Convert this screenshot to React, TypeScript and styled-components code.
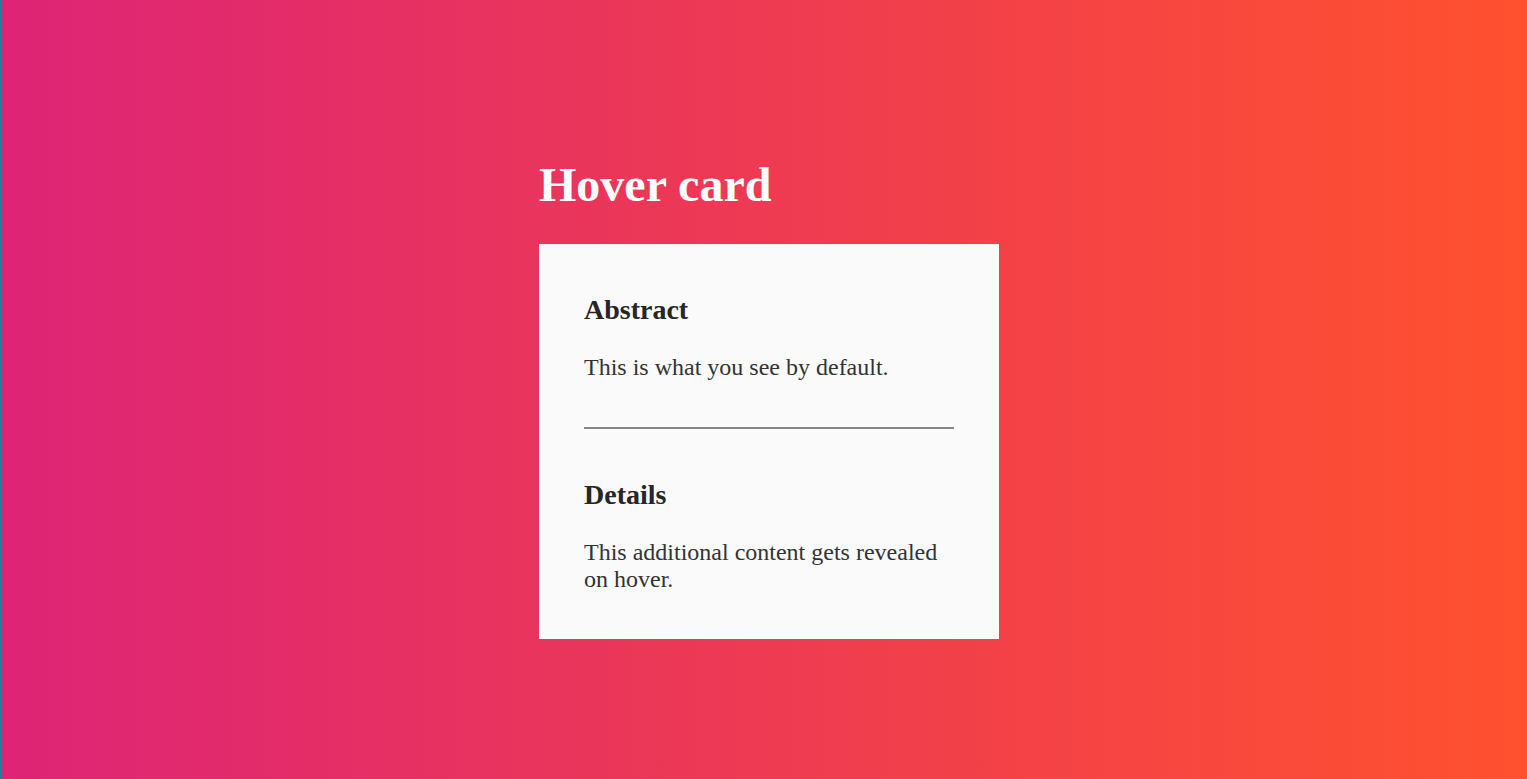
import React from "react";
import styled, { createGlobalStyle } from "styled-components";

const GlobalStyle = createGlobalStyle`
  html, body {
    margin: 0;
    padding: 0;
  }
  body {
    font-family: "Liberation Serif", "Times New Roman", serif;
  }
`;

const Page = styled.main`
  box-sizing: border-box;
  min-height: 100vh;
  border-left: 1px solid #1f7fa8;
  background: linear-gradient(to right, #dd2476, #ff512f);
  padding: 157px 0 0 538px;
  display: flex;
  flex-direction: column;
  align-items: flex-start;
`;

const Title = styled.h1`
  margin: 0;
  font-size: 48px;
  font-weight: 700;
  line-height: normal;
  color: #ffffff;
`;

const Card = styled.article`
  box-sizing: border-box;
  width: 460px;
  margin-top: 32px;
  padding: 50px 45px 46px;
  background: #fafafa;
  color: #333333;
`;

const Heading = styled.h3`
  margin: 0;
  font-size: 28px;
  font-weight: 700;
  line-height: normal;
  color: #262626;
`;

const Text = styled.p`
  margin: 28px 0 0;
  font-size: 24px;
  line-height: normal;
  color: #333333;
`;

const Divider = styled.hr`
  margin: 46px 0 50px;
  border: none;
  border-top: 2px solid #858585;
  height: 0;
`;

export default function App() {
  return (
    <>
      <GlobalStyle />
      <Page>
        <Title>Hover card</Title>
        <Card>
          <Heading>Abstract</Heading>
          <Text>This is what you see by default.</Text>
          <Divider />
          <Heading>Details</Heading>
          <Text>This additional content gets revealed on hover.</Text>
        </Card>
      </Page>
    </>
  );
}
